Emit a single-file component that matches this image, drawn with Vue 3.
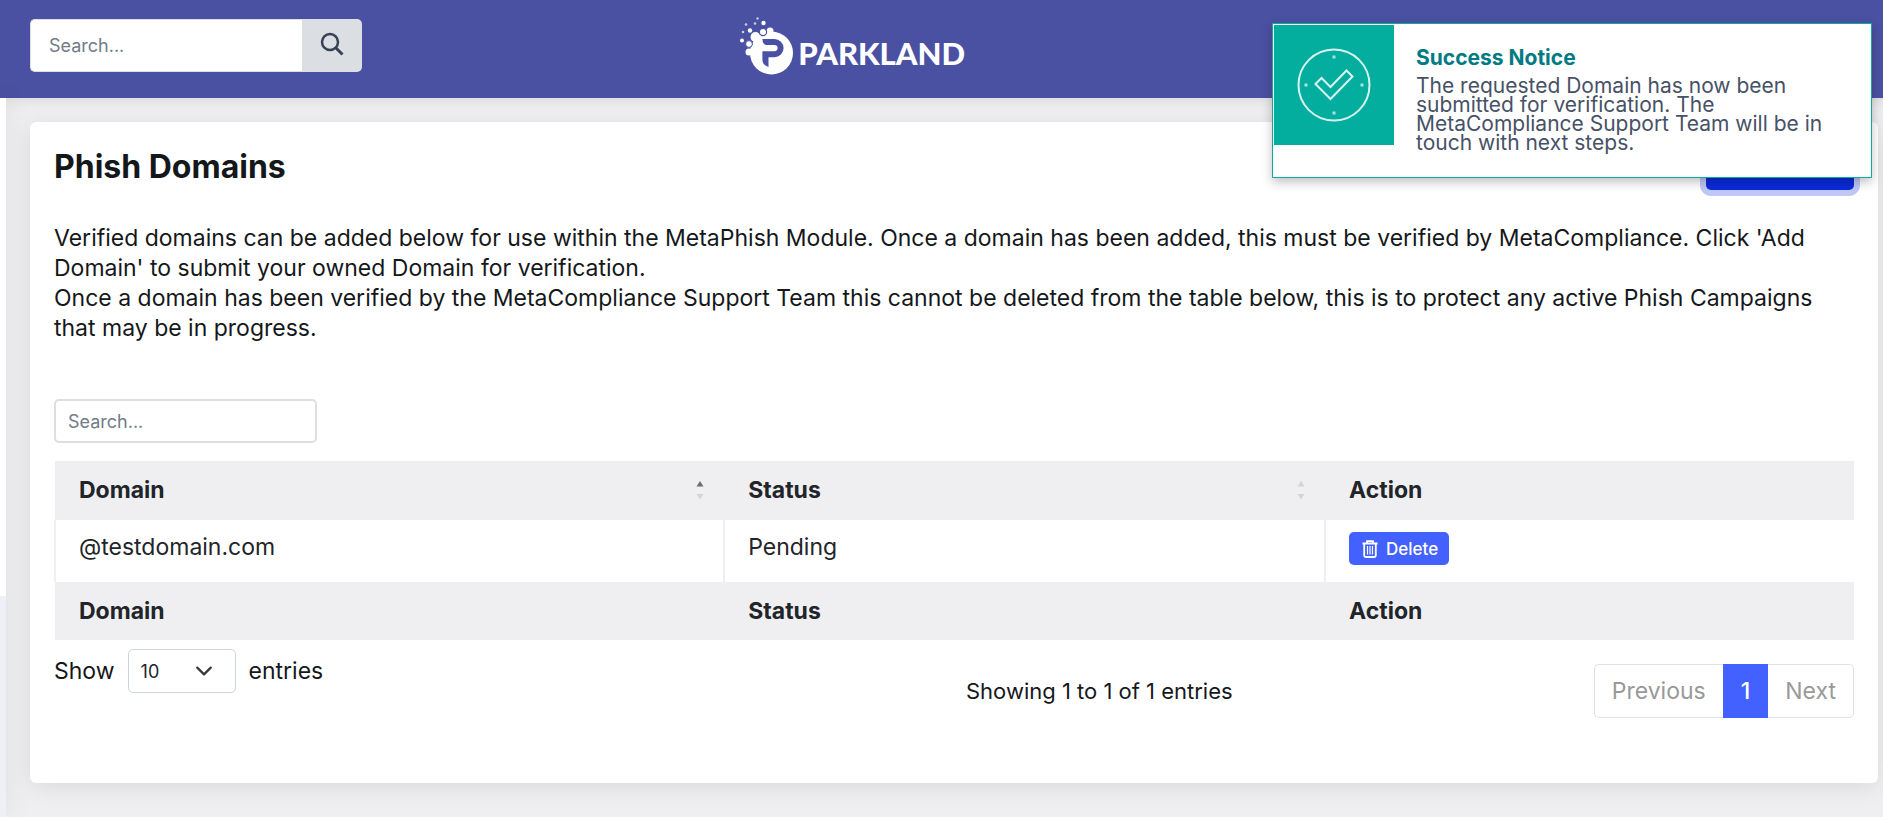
<template>
  <div class="page">
    <!-- Top bar -->
    <header class="topbar">
      <form class="top-search" @submit.prevent>
        <input v-model="globalSearch" type="text" placeholder="Search..." aria-label="Search" />
        <button type="submit" aria-label="Search">
          <svg viewBox="0 0 24 24" width="24" height="24" fill="none" stroke="currentColor" stroke-width="2.5">
            <circle cx="10" cy="10" r="8" />
            <path d="M15.5 15.5 22.5 22.5" stroke-width="3" />
          </svg>
        </button>
      </form>
      <a class="logo" href="#">
        <svg viewBox="0 0 54 58" width="54" height="58" fill="#fff">
          <circle cx="31.5" cy="36" r="21.5" />
          <circle cx="15.5" cy="20" r="5" />
          <circle cx="30" cy="14" r="3.5" />
          <circle cx="23" cy="15" r="3.6" stroke="#4b51a2" stroke-width="1.2" />
          <circle cx="9" cy="27" r="3.4" stroke="#4b51a2" stroke-width="1" />
          <circle cx="9" cy="35" r="3.5" />
          <circle cx="10" cy="13.5" r="2.2" />
          <circle cx="2" cy="23.5" r="2" />
          <circle cx="23.5" cy="6" r="2.2" />
          <circle cx="17.5" cy="1.5" r="1.2" opacity="0.7" />
          <circle cx="15" cy="6.5" r="1.3" opacity="0.7" />
          <circle cx="6" cy="7.5" r="1.3" opacity="0.7" />
          <circle cx="3" cy="15" r="1.3" opacity="0.7" />
          <path d="M22.4 22H34.5A9.1 9.1 0 0 1 34.5 40.2H28.5V50Q22.4 48 22.4 43V34.2H34.5A3 3 0 0 0 34.5 28H26Q22.4 27 22.4 22z" fill="#4b51a2" />
        </svg>
        <span>PARKLAND</span>
      </a>
    </header>

    <div class="body">
      <aside class="sidebar">
        <div class="sidebar-menu"></div>
        <div class="sidebar-footer"></div>
      </aside>

      <main class="content">
        <section class="card">
          <div class="card-head">
            <h1>Phish Domains</h1>
            <button class="btn-add" type="button" aria-label="Add Domain"></button>
          </div>

          <p class="intro">
            Verified domains can be added below for use within the MetaPhish Module. Once a domain has been added, this
            must be verified by MetaCompliance. Click 'Add Domain' to submit your owned Domain for verification.<br />
            Once a domain has been verified by the MetaCompliance Support Team this cannot be deleted from the table
            below, this is to protect any active Phish Campaigns that may be in progress.
          </p>

          <input
            v-model="tableSearch"
            class="table-search"
            type="text"
            placeholder="Search..."
            aria-label="Search domains"
          />

          <table class="domains">
            <thead>
              <tr>
                <th v-for="col in columns" :key="col.key" :class="col.key">
                  <div class="th-inner">
                    {{ col.label }}
                    <svg v-if="col.sortable" viewBox="0 0 8 20" width="8" height="20">
                      <path d="M4 1 7.5 6.5H.5z" :fill="col.sorted ? '#6c6d70' : '#d3d4d6'" />
                      <path d="M4 19.5 7.5 14H.5z" fill="#d3d4d6" />
                    </svg>
                  </div>
                </th>
              </tr>
            </thead>
            <tbody>
              <tr v-for="row in rows" :key="row.domain">
                <td>{{ row.domain }}</td>
                <td>{{ row.status }}</td>
                <td>
                  <button class="btn-delete" type="button">
                    <svg viewBox="0 0 16 18" width="16" height="18" fill="none" stroke="currentColor">
                      <path d="M.5 3.5H15.5M5 3V1.2H11V3" stroke-width="1.8" />
                      <path d="M2.2 4V15.5Q2.2 17 3.7 17H12.3Q13.800 17 13.800 15.5V4" stroke-width="1.8" />
                      <path d="M5.500 6V14.500M8 6V14.500M10.500 6V14.500" stroke-width="1.200" />
                    </svg>
                    Delete
                  </button>
                </td>
              </tr>
            </tbody>
            <tfoot>
              <tr>
                <th v-for="col in columns" :key="col.key">{{ col.label }}</th>
              </tr>
            </tfoot>
          </table>

          <div class="table-foot">
            <div class="length">
              <label for="page-length">Show</label>
              <span class="select-wrap">
                <select id="page-length" v-model="pageLength">
                  <option v-for="n in [10, 25, 50, 100]" :key="n" :value="n">{{ n }}</option>
                </select>
                <svg viewBox="0 0 16 16" width="18" height="18" fill="none" stroke="#343a40" stroke-width="2">
                  <path d="m2 5 6 6 6-6" stroke-linecap="round" stroke-linejoin="round" />
                </svg>
              </span>
              <span>entries</span>
            </div>
            <div class="paging">
              <div class="info">Showing 1 to 1 of 1 entries</div>
              <nav class="pages" aria-label="Pagination">
                <button type="button" disabled>Previous</button>
                <button type="button" class="active">1</button>
                <button type="button" disabled>Next</button>
              </nav>
            </div>
          </div>
        </section>
      </main>
    </div>

    <!-- Toast -->
    <div class="toast" role="status">
      <div class="toast-icon">
        <svg viewBox="0 0 74 74" width="74" height="74" fill="none" stroke="#d9f3ef" stroke-width="2">
          <circle cx="37" cy="37" r="35.5" />
          <path d="M18.5 36 24.5 30 33.5 39 49.5 22.5 55.5 28.5 33.5 51z" />
          <g fill="#a5e3db" stroke="none">
            <rect x="35.5" y="7.5" width="3" height="3" />
            <rect x="35.5" y="63.5" width="3" height="3" />
            <rect x="7.5" y="35.5" width="3" height="3" />
            <rect x="63.5" y="35.5" width="3" height="3" />
          </g>
        </svg>
      </div>
      <div class="toast-text">
        <strong>Success Notice</strong>
        <p>
          The requested Domain has now been submitted for verification. The MetaCompliance Support Team will be in touch
          with next steps.
        </p>
      </div>
    </div>
  </div>
</template>

<script setup>
import { ref } from 'vue'

const globalSearch = ref('')
const tableSearch = ref('')
const pageLength = ref(10)

const columns = [
  { key: 'domain', label: 'Domain', sortable: true, sorted: true },
  { key: 'status', label: 'Status', sortable: true, sorted: false },
  { key: 'action', label: 'Action', sortable: false, sorted: false }
]

const rows = [{ domain: '@testdomain.com', status: 'Pending' }]
</script>

<style>
body {
  margin: 0;
  background: #efeff1;
}
</style>

<style scoped>
.page {
  display: flex;
  flex-direction: column;
  min-height: 100vh;
  font-family: Inter, 'Liberation Sans', sans-serif;
  font-size: 23px;
  color: #15181b;
}

.page * {
  box-sizing: border-box;
}

button,
input,
select {
  font-family: inherit;
}

/* Top bar */
.topbar {
  display: grid;
  grid-template-columns: 4fr auto 5fr;
  align-items: center;
  height: 98px;
  padding: 0 30px;
  background: #4b51a2;
}

.top-search {
  display: flex;
  width: 332px;
  height: 53px;
  margin-bottom: 7px;
}

.top-search input {
  flex: 1;
  min-width: 0;
  padding: 0 18px;
  border: 1px solid #dbdfe4;
  border-right: 0;
  border-radius: 5px 0 0 5px;
  font-size: 18px;
}

.top-search button {
  display: flex;
  align-items: center;
  justify-content: center;
  width: 60px;
  padding: 0 0 4px;
  border: 0;
  border-radius: 0 5px 5px 0;
  background: #dbdfe4;
  color: #364152;
}

input::placeholder {
  color: #727b87;
  opacity: 1;
}

.logo {
  display: flex;
  align-items: center;
  gap: 4px;
  margin-bottom: 7px;
  color: #fff;
  font-family: Lato, sans-serif;
  font-size: 31px;
  font-weight: 900;
  text-decoration: none;
}

.logo span {
  padding-top: 14px;
}

/* Layout */
.body {
  display: flex;
  flex: 1;
}

.sidebar {
  display: flex;
  flex-direction: column;
  width: 6px;
  background: #fff;
  box-shadow: 0 0 24px rgba(0, 0, 0, 0.15);
}

.sidebar-menu {
  flex: 1;
}

.sidebar-footer {
  height: 221px;
  background: #eff0f7;
}

.content {
  flex: 1;
  min-width: 0;
  padding: 24px 5px 34px 24px;
  box-shadow: inset 0 12px 16px -12px rgba(0, 0, 0, 0.12);
}

.card {
  height: 100%;
  padding: 20px 24px 64px;
  border-radius: 6px;
  background: #fff;
  box-shadow: 0 4px 24px rgba(0, 0, 0, 0.09);
}

.card-head {
  display: flex;
  align-items: center;
  justify-content: space-between;
}

h1 {
  margin: 0;
  font-size: 32px;
  font-weight: 700;
}

.btn-add {
  width: 148px;
  height: 48px;
  border: 0;
  border-radius: 5px;
  background: #0a2bdb;
  box-shadow: 0 0 0 6px #c0c8f8;
}

.intro {
  margin: 33px 0 56px;
  line-height: 30px;
}

.table-search {
  display: block;
  width: 263px;
  height: 44px;
  padding: 0 12px;
  border: 2px solid #dbdfe4;
  border-radius: 5px;
  font-size: 18px;
}

/* Table */
.domains {
  width: 100%;
  margin-top: 18px;
  border-collapse: collapse;
  table-layout: fixed;
  color: #212529;
  line-height: 30px;
}

.domains th,
.domains td {
  text-align: left;
}

.domains th {
  padding: 14px 20px 14px 24px;
  background: #efeff1;
  font-weight: 700;
}

.domains thead th {
  padding-bottom: 15px;
}

.domains td {
  height: 62px;
  padding: 12px 23px;
  border-left: 2px solid #efeff1;
  vertical-align: top;
}

.domain {
  width: 37.2%;
}

.status {
  width: 33.4%;
}

.th-inner {
  display: flex;
  align-items: center;
  justify-content: space-between;
}

.btn-delete {
  display: flex;
  align-items: center;
  gap: 8px;
  height: 33px;
  padding: 0 11px 0 13px;
  border: 0;
  border-radius: 5px;
  background: #4361ff;
  color: #fff;
  font-size: 17px;
  font-weight: 500;
}

/* Below the table */
.table-foot {
  display: grid;
  grid-template-columns: 1fr 1fr;
  align-items: start;
  padding-top: 9px;
}

.length {
  display: flex;
  align-items: center;
  gap: 13px;
}

.select-wrap {
  position: relative;
}

.select-wrap select {
  display: block;
  width: 108px;
  height: 44px;
  padding: 0 12px;
  border: 1px solid #ced4da;
  border-radius: 5px;
  background: #fff;
  color: #212529;
  font-size: 18px;
  appearance: none;
}

.select-wrap svg {
  position: absolute;
  top: 13px;
  right: 23px;
  pointer-events: none;
}

.paging {
  display: flex;
  align-items: center;
  justify-content: space-between;
  padding: 15px 0 0 12px;
}

.info {
  font-size: 22px;
}

.pages {
  display: flex;
}

.pages button {
  height: 54px;
  padding: 0 17px;
  border: 1px solid #dee2e6;
  background: #fff;
  color: #999;
  font-size: 23px;
}

.pages button:first-child {
  border-right: 0;
  border-radius: 5px 0 0 5px;
}

.pages button:last-child {
  border-left: 0;
  border-radius: 0 5px 5px 0;
}

.pages .active {
  border-color: #4361ff;
  background: #4361ff;
  color: #fff;
  font-weight: 500;
}

/* Toast */
.toast {
  position: absolute;
  top: 23px;
  right: 11px;
  display: flex;
  align-items: flex-start;
  gap: 22px;
  width: 600px;
  height: 155px;
  padding: 1px;
  border: 1px solid #05ae9f;
  background: #fff;
  box-shadow: 0 4px 10px rgba(0, 0, 0, 0.25);
}

.toast-icon {
  display: flex;
  flex: none;
  align-items: center;
  justify-content: center;
  width: 120px;
  height: 120px;
  background: #04ae9f;
}

.toast-text {
  padding: 21px 40px 0 0;
  color: #475166;
  font-size: 21px;
}

.toast-text strong {
  display: block;
  color: #007a83;
  line-height: 24px;
}

.toast-text p {
  margin: 6px 0 0;
  line-height: 19px;
}
</style>
